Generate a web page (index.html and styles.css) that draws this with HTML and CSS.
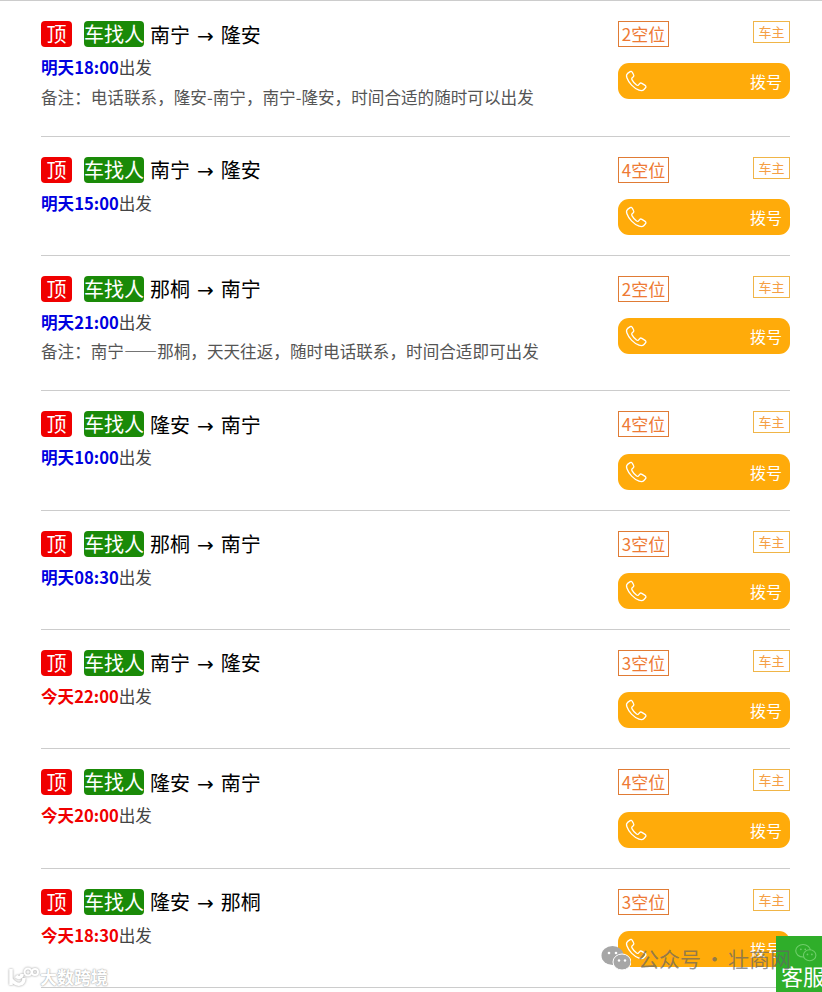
FILE: index.html
```html
<!DOCTYPE html>
<html lang="zh">
<head>
<meta charset="utf-8">
<title>拼车</title>
<link rel="stylesheet" href="styles.css">
</head>
<body>
<svg class="defs" width="0" height="0"><defs>
<symbol id="phone" viewBox="0 0 24 24"><path d="M6.2 2.6 3.6 4.4C2.4 5.300 2.300 7 2.900 8.800 4.700 13.900 9.600 19.200 15 21.200 17 21.900 18.900 21.700 20 20.500L21.500 18.800C22.200 18 22 17 21.100 16.400L17.900 14.400C17.100 13.900 16.200 14 15.600 14.700L14.500 15.900C13.900 16.400 13.200 16.400 12.600 16 10.600 14.500 9 12.700 7.900 10.600 7.600 10 7.700 9.300 8.200 8.800L9.300 7.800C9.900 7.200 10 6.400 9.600 5.700L8.200 3.100C7.800 2.300 6.900 2.100 6.200 2.600Z" fill="none" stroke="currentColor" stroke-width="1.300"/></symbol>
</defs></svg>
<main class="list">
  <article class="row note-row">
    <div class="info">
      <h3 class="title"><span class="tag-top">顶</span><span class="tag-kind">车找人</span><span class="route">南宁<i class="arrow">→</i>隆安</span></h3>
      <p class="time"><b class="tomorrow">明天18:00</b>出发</p>
      <p class="note">备注：电话联系，隆安-南宁，南宁-隆安，时间合适的随时可以出发</p>
    </div>
    <div class="side">
      <div class="side-top"><span class="seats">2空位</span><span class="owner">车主</span></div>
      <a class="call"><svg class="ico"><use href="#phone"/></svg><span>拨号</span></a>
    </div>
  </article>
  <article class="row">
    <div class="info">
      <h3 class="title"><span class="tag-top">顶</span><span class="tag-kind">车找人</span><span class="route">南宁<i class="arrow">→</i>隆安</span></h3>
      <p class="time"><b class="tomorrow">明天15:00</b>出发</p>
    </div>
    <div class="side">
      <div class="side-top"><span class="seats">4空位</span><span class="owner">车主</span></div>
      <a class="call"><svg class="ico"><use href="#phone"/></svg><span>拨号</span></a>
    </div>
  </article>
  <article class="row note-row">
    <div class="info">
      <h3 class="title"><span class="tag-top">顶</span><span class="tag-kind">车找人</span><span class="route">那桐<i class="arrow">→</i>南宁</span></h3>
      <p class="time"><b class="tomorrow">明天21:00</b>出发</p>
      <p class="note">备注：南宁——那桐，天天往返，随时电话联系，时间合适即可出发</p>
    </div>
    <div class="side">
      <div class="side-top"><span class="seats">2空位</span><span class="owner">车主</span></div>
      <a class="call"><svg class="ico"><use href="#phone"/></svg><span>拨号</span></a>
    </div>
  </article>
  <article class="row">
    <div class="info">
      <h3 class="title"><span class="tag-top">顶</span><span class="tag-kind">车找人</span><span class="route">隆安<i class="arrow">→</i>南宁</span></h3>
      <p class="time"><b class="tomorrow">明天10:00</b>出发</p>
    </div>
    <div class="side">
      <div class="side-top"><span class="seats">4空位</span><span class="owner">车主</span></div>
      <a class="call"><svg class="ico"><use href="#phone"/></svg><span>拨号</span></a>
    </div>
  </article>
  <article class="row">
    <div class="info">
      <h3 class="title"><span class="tag-top">顶</span><span class="tag-kind">车找人</span><span class="route">那桐<i class="arrow">→</i>南宁</span></h3>
      <p class="time"><b class="tomorrow">明天08:30</b>出发</p>
    </div>
    <div class="side">
      <div class="side-top"><span class="seats">3空位</span><span class="owner">车主</span></div>
      <a class="call"><svg class="ico"><use href="#phone"/></svg><span>拨号</span></a>
    </div>
  </article>
  <article class="row">
    <div class="info">
      <h3 class="title"><span class="tag-top">顶</span><span class="tag-kind">车找人</span><span class="route">南宁<i class="arrow">→</i>隆安</span></h3>
      <p class="time"><b class="today">今天22:00</b>出发</p>
    </div>
    <div class="side">
      <div class="side-top"><span class="seats">3空位</span><span class="owner">车主</span></div>
      <a class="call"><svg class="ico"><use href="#phone"/></svg><span>拨号</span></a>
    </div>
  </article>
  <article class="row">
    <div class="info">
      <h3 class="title"><span class="tag-top">顶</span><span class="tag-kind">车找人</span><span class="route">隆安<i class="arrow">→</i>南宁</span></h3>
      <p class="time"><b class="today">今天20:00</b>出发</p>
    </div>
    <div class="side">
      <div class="side-top"><span class="seats">4空位</span><span class="owner">车主</span></div>
      <a class="call"><svg class="ico"><use href="#phone"/></svg><span>拨号</span></a>
    </div>
  </article>
  <article class="row">
    <div class="info">
      <h3 class="title"><span class="tag-top">顶</span><span class="tag-kind">车找人</span><span class="route">隆安<i class="arrow">→</i>那桐</span></h3>
      <p class="time"><b class="today">今天18:30</b>出发</p>
    </div>
    <div class="side">
      <div class="side-top"><span class="seats">3空位</span><span class="owner">车主</span></div>
      <a class="call"><svg class="ico"><use href="#phone"/></svg><span>拨号</span></a>
    </div>
  </article>
</main>

<aside class="service">
  <svg class="service-ico" viewBox="0 0 30 26"><ellipse cx="11" cy="10" rx="10" ry="8.500" fill="none" stroke="#6fce6a" stroke-width="1.500"/><ellipse cx="20" cy="16" rx="8.500" ry="7.500" fill="#2fae2a" stroke="#6fce6a" stroke-width="1.500"/><circle cx="8" cy="8" r="1.200" fill="#6fce6a"/><circle cx="14" cy="8" r="1.200" fill="#6fce6a"/><circle cx="17" cy="15" r="1.200" fill="#6fce6a"/><circle cx="23" cy="15" r="1.200" fill="#6fce6a"/></svg>
  <span>客服</span>
</aside>
<div class="mark-left">
  <svg class="mark-logo" viewBox="0 0 32 24"><path d="M4 4V20M4 14C10 22 17 20 17 13M9 11C12 14 15 12 15 9" fill="none" stroke="#fff" stroke-width="3.500"/><circle cx="21" cy="7" r="3.500" fill="none" stroke="#fff" stroke-width="2"/><circle cx="28" cy="7" r="3" fill="none" stroke="#fff" stroke-width="2"/></svg>
  <span>大数跨境</span>
</div>
<div class="mark-right">
  <svg class="mark-wx" viewBox="0 0 30 26"><ellipse cx="11.500" cy="10.500" rx="11" ry="9.500" fill="#a6a6a6"/><ellipse cx="21" cy="17" rx="9" ry="8" fill="#a6a6a6" stroke="#fff" stroke-width="1"/><circle cx="8" cy="8" r="1.300" fill="#fff"/><circle cx="15" cy="8" r="1.300" fill="#fff"/><circle cx="18" cy="15.500" r="1.200" fill="#fff"/><circle cx="24" cy="15.500" r="1.200" fill="#fff"/></svg>
  <span>公众号<i class="dot">·</i>壮商网</span>
</div>
</body>
</html>
```
FILE: styles.css
```css
* { box-sizing: border-box; }
html, body { margin: 0; padding: 0; }
body {
  height: 992px;
  overflow: hidden;
  background: #fff;
  font-family: "Microsoft YaHei", "Noto Sans CJK SC", sans-serif;
  border-top: 1px solid #ccc;
  position: relative;
}
.defs { position: absolute; }
.list { margin: 0 32px 0 41px; }
.row {
  display: flex;
  justify-content: space-between;
  height: 119.33px;
  padding-top: 20px;
  border-bottom: 1px solid #ccc;
}
.note-row { height: 135.5px; }
.info { min-width: 0; }
.title {
  margin: 0;
  display: flex;
  align-items: center;
  height: 26px;
  font-size: 20px;
  font-weight: 400;
  color: #000;
  white-space: nowrap;
  line-height: 26px;
}
.tag-top, .tag-kind {
  height: 26px;
  line-height: 26px;
  border-radius: 4px;
  color: #fff;
}
.tag-top { width: 31px; text-align: center; background: #f00000; margin-right: 12px; }
.tag-kind { width: 60px; background: #1a8a08; }
.route { margin-left: 6px; padding-top: 2px; line-height: 26px; }
.arrow {
  font-family: "DejaVu Sans", sans-serif;
  font-style: normal;
  font-weight: 400;
  margin: 0 7px;
}
.time {
  margin: 8px 0 0;
  font-size: 16.6px;
  line-height: 24px;
  color: #444;
}
.time b { font-weight: 700; }
.tomorrow { color: #0000e0; }
.today { color: #f00000; }
.note {
  margin: 5.5px 0 0;
  font-size: 16.6px;
  line-height: 24px;
  color: #555;
}
.side { width: 172px; flex: none; }
.side-top {
  display: flex;
  justify-content: space-between;
  align-items: flex-start;
}
.seats {
  width: 51px;
  height: 26px;
  border: 1px solid #e07b35;
  color: #ee7a34;
  font-size: 17px;
  line-height: 23px;
  text-align: center;
}
.owner {
  width: 37px;
  height: 22px;
  border: 1px solid #f0b548;
  color: #f5a045;
  font-size: 13px;
  line-height: 20px;
  text-align: center;
}
.call {
  display: flex;
  justify-content: space-between;
  align-items: center;
  height: 36px;
  margin-top: 16.4px;
  padding: 0 8px 0 6px;
  border-radius: 11px;
  background: #ffab0a;
  color: #fff;
  font-size: 16px;
}
.ico { width: 24px; height: 24px; color: #fff; }

.mark-left {
  position: absolute;
  left: 7px;
  top: 964px;
  display: flex;
  align-items: center;
  gap: 1px;
  color: #fff;
  font-size: 17px;
  line-height: 22px;
  font-weight: 700;
  text-shadow: 0 0 2px #aaa, 0 0 1px #999;
}
.mark-logo { width: 32px; height: 24px; filter: drop-shadow(0 0 1px #999); }
.mark-right {
  position: absolute;
  left: 601px;
  top: 944px;
  display: flex;
  align-items: center;
  gap: 7px;
  color: rgba(100, 100, 100, .7);
  font-size: 21px;
  line-height: 26px;
  white-space: nowrap;
}
.dot { font-style: normal; margin: 0 3px; }
.mark-wx { width: 30px; height: 26px; }
.service {
  position: absolute;
  left: 776px;
  top: 935px;
  width: 46px;
  height: 57px;
  background: #2fae2a;
  color: #fff;
  font-size: 22px;
  overflow: hidden;
  white-space: nowrap;
  padding: 7px 0 0 5px;
  line-height: 24px;
}
.service-ico { display: block; width: 22px; height: 20px; margin: 0 0 0 14px; }
```
